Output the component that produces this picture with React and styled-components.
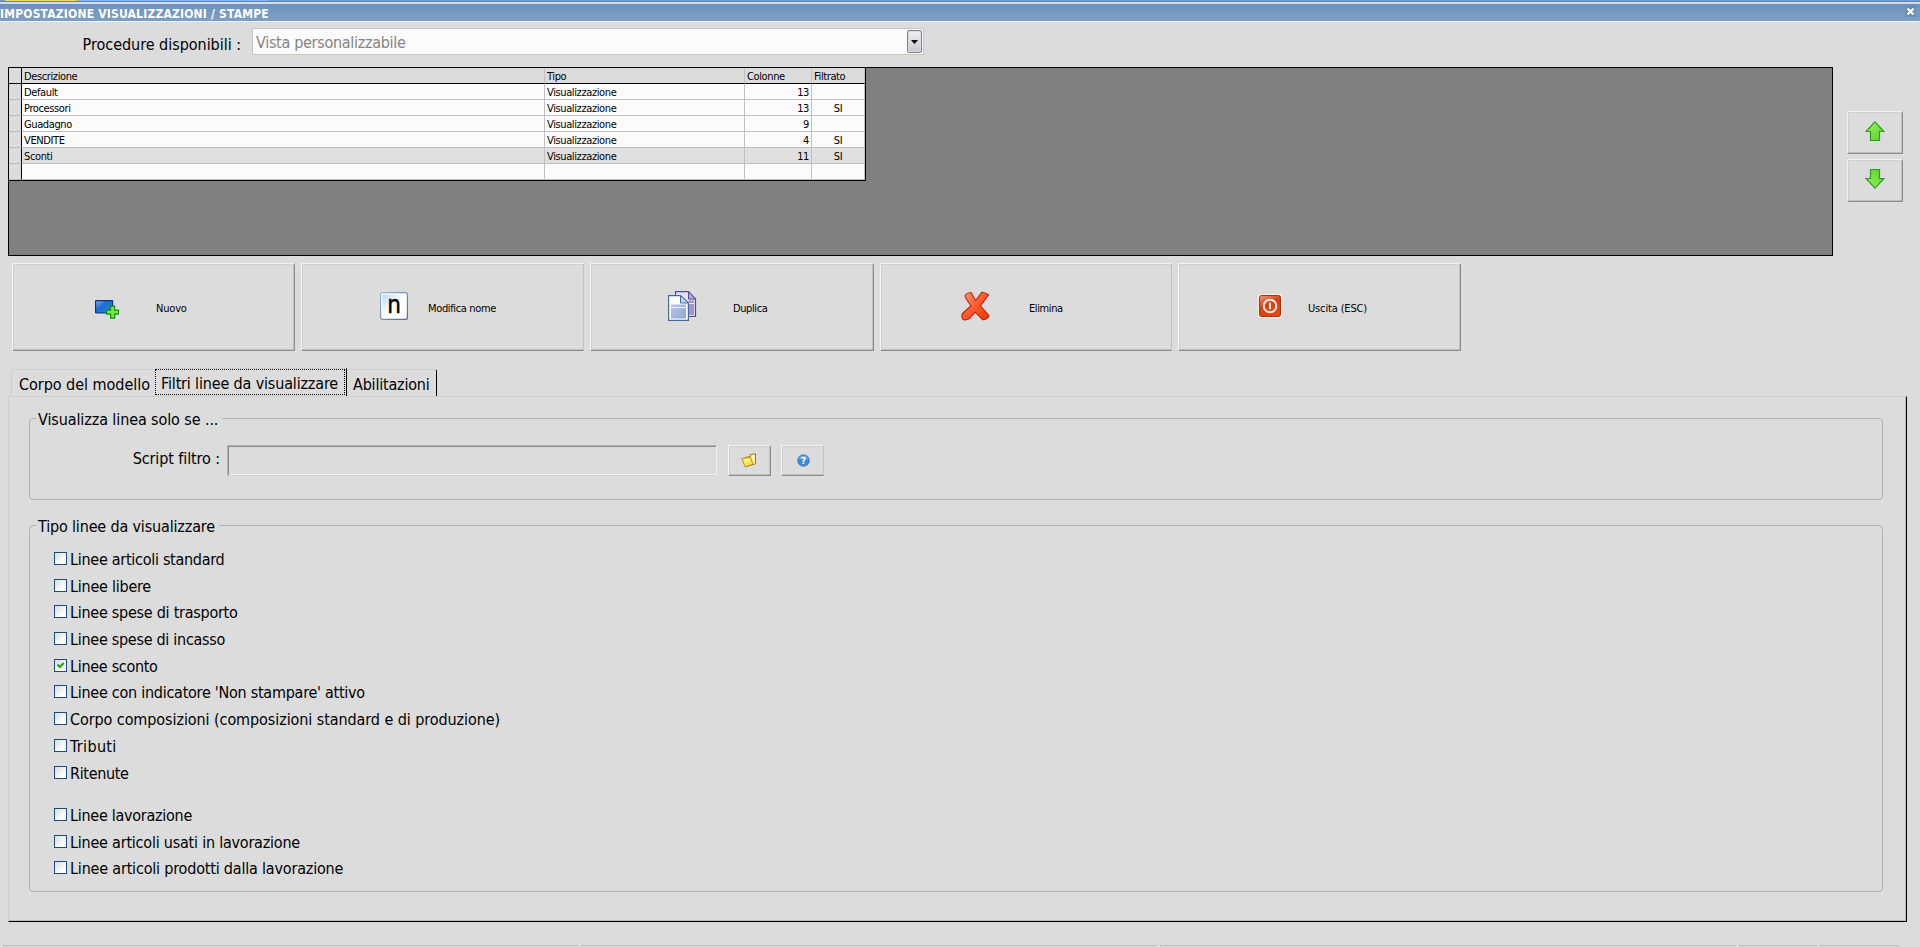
import { useState } from "react";
import styled, { createGlobalStyle } from "styled-components";

const GlobalStyle = createGlobalStyle`
  * {
    box-sizing: border-box;
  }
  body {
    margin: 0;
    overflow: hidden;
    background-color: #dcdcdc;
    color: #000;
    font-family: "DejaVu Sans Condensed", "DejaVu Sans", sans-serif;
    font-stretch: condensed;
    font-size: 16px;
  }
  button {
    font: inherit;
    color: inherit;
    margin: 0;
    padding: 0;
  }
`;

const Window = styled.div`
  height: 947px;
  display: flex;
  flex-direction: column;
  white-space: nowrap;
`;

/* top strip and title bar */
const Strip = styled.div`
  height: 2px;
  display: flex;
  padding-left: 5px;
  gap: 1px;
  background-color: #6e9bd0;
  border-bottom: 1px solid #5f86b5;
  flex: none;
`;
const StripTab = styled.div`
  width: ${({ $width }) => $width}px;
  background-color: ${({ $active }) => ($active ? "#fbd467" : "#85b7f0")};
`;
const TitleBar = styled.header`
  height: 20px;
  flex: none;
  display: flex;
  justify-content: space-between;
  align-items: center;
  padding-right: 4px;
  background: linear-gradient(#6c92bc, #7e9fc4);
  border-top: 2px solid #d6dbe2;
  border-bottom: 1px solid #eef3f9;
`;
const Title = styled.h1`
  margin: 3px 0 0;
  font-size: 12px;
  font-weight: bold;
  line-height: 16px;
  letter-spacing: 0.2px;
  color: #fff;
`;
const CloseButton = styled.button`
  width: 11px;
  height: 12px;
  border: 1px solid #6c93bf;
  background-color: #6a8cb3;
  display: flex;
  align-items: center;
  justify-content: center;
  margin-bottom: 3px;
`;

/* combo row */
const ComboRow = styled.div`
  display: flex;
  height: 45px;
  flex: none;
  padding-top: 6px;
`;
const Label = styled.label`
  width: ${({ $width }) => $width}px;
  padding: ${({ $top }) => $top}px ${({ $right }) => $right}px 0 0;
  text-align: right;
  line-height: 20px;
  letter-spacing: ${({ $track }) => $track}px;
`;
const Combo = styled.div`
  width: 672px;
  height: 27px;
  display: flex;
  justify-content: space-between;
  padding: 1px 1px 1px 3px;
  border: 1px solid #c9c7ba;
  background-color: #fbfbfb;
  color: #858585;
  line-height: 25px;
  letter-spacing: -0.3px;
`;
const ComboButton = styled.button`
  width: 15px;
  height: 23px;
  border: 1px solid #7f7f86;
  border-radius: 2px;
  background: linear-gradient(#f2f2f5, #c6c6cc);
  box-shadow: inset 0 0 0 1px #d9d9e0;
  display: flex;
  align-items: center;
  justify-content: center;
`;

/* views grid */
const GridArea = styled.div`
  display: flex;
  flex: none;
  height: 189px;
  padding-left: 8px;
  gap: 14px;
`;
const GridBack = styled.div`
  width: 1825px;
  border: 1px solid #000;
  background-color: #808080;
`;
const Grid = styled.div`
  width: 857px;
  border-right: 1px solid #000;
  border-bottom: 1px solid #000;
  background-color: #fbfbfb;
  font-size: 11px;
  line-height: 18px;
  letter-spacing: -0.38px;
`;
const GridRow = styled.div`
  height: 16px;
  display: grid;
  grid-template-columns: 13px 523px 200px 67px 53px;
  background-color: ${({ $head, $selected }) =>
    $head ? "#dcdcdc" : $selected ? "#e0e0e0" : "#fbfbfb"};
`;
const Cell = styled.span`
  height: 16px;
  overflow: hidden;
  padding: 0 2px;
  text-align: ${({ $align }) => $align || "left"};
  border-right: 1px solid #c0c0c0;
  border-bottom: 1px solid ${({ $head }) => ($head ? "#000" : "#bdbdbd")};
`;
const RowHandle = styled(Cell)`
  background-color: #dcdcdc;
  border-right-color: #000;
`;
const MoveButtons = styled.div`
  display: flex;
  flex-direction: column;
  gap: 5px;
  padding-top: 44px;
`;

/* buttons */
const RaisedButton = styled.button`
  display: flex;
  align-items: center;
  justify-content: center;
  background-color: #dcdcdc;
  border: 1px solid;
  border-color: #f2f2f2 ${({ $soft }) => ($soft ? "#c2c2c2" : "#8c8c8c")} #8c8c8c
    #f2f2f2;
  box-shadow: inset 1px 1px 0 #cfcfd4,
    inset ${({ $soft }) => ($soft ? "0" : "-1px")} -1px 0 #bebebe;
`;
const MoveButton = styled(RaisedButton)`
  width: 56px;
  height: 43px;
  padding-bottom: 2px;
`;
const SmallButton = styled(RaisedButton)`
  width: 43px;
  height: 31px;
  padding: 0 1px 1px 0;
`;
const Actions = styled.div`
  display: flex;
  flex: none;
  height: 95px;
  padding: 7px 0 0 12px;
  gap: 6px;
`;
const ActionButton = styled(RaisedButton)`
  width: ${({ $width }) => $width}px;
  height: 88px;
  justify-content: flex-start;
  padding: 0 0 2px ${({ $left }) => $left - 1}px;
  gap: ${({ $gap }) => $gap}px;
  font-size: 11px;
  letter-spacing: ${({ $track }) => $track}px;
`;
const ActionText = styled.span`
  line-height: 16px;
  padding-top: 5px;
`;

/* tabs */
const Tabs = styled.nav`
  display: flex;
  flex: none;
  align-items: flex-end;
  height: 45px;
  padding-left: 11px;
`;
const Tab = styled.button`
  width: ${({ $width }) => $width}px;
  height: 27px;
  padding-left: ${({ $left }) => $left}px;
  text-align: left;
  line-height: 29px;
  letter-spacing: ${({ $track }) => $track}px;
  background-color: #dcdcdc;
  border: 0;
  border-top: 1px solid #cdcdd2;
  border-left: ${({ $first }) => ($first ? "1px solid #cdcdd2" : "0")};
  border-right: ${({ $first }) => ($first ? "0" : "1px solid #000")};
  border-radius: 3px 2px 0 0;
`;
const ActiveTab = styled(Tab)`
  height: 28px;
  padding: 0;
  display: flex;
  border-radius: 0;
`;
const Focus = styled.span`
  width: 190px;
  height: 26px;
  padding-left: 5px;
  line-height: 27px;
  border: 1px dotted #000;
`;
const Panel = styled.section`
  width: 1899px;
  height: 526px;
  flex: none;
  margin-left: 8px;
  padding: 11px 23px 0 20px;
  border: 1px solid #d0d0d4;
  border-right-color: #000;
  border-bottom-color: #000;
  box-shadow: inset -1px -1px 0 #bcbcbc;
`;
const Group = styled.fieldset`
  height: ${({ $height }) => $height}px;
  margin: 0 0 ${({ $after }) => $after || 0}px;
  padding: 0 0 0 6px;
  border: 1px solid #b2b2b2;
  border-radius: 4px;
`;
const Legend = styled.legend`
  height: 21px;
  padding: 2px 4px 0 2px;
  line-height: 19px;
  letter-spacing: ${({ $track }) => $track}px;
`;
const FilterRow = styled.div`
  display: flex;
  padding-top: 16px;
`;
const ScriptInput = styled.input`
  width: 490px;
  height: 31px;
  margin-right: 11px;
  background-color: #dcdcdc;
  border: 1px solid;
  border-color: #b4b4b4 #f2f2f2 #d0d0d0 #b4b4b4;
  box-shadow: inset 1px 1px 0 #8a8a8a, inset 0 -1px 0 #f0f0f0;
  border-radius: 0;
  outline: 0;
`;
const HelpButton = styled(SmallButton)`
  margin-left: 10px;
  padding-left: 2px;
`;

const CheckList = styled.div`
  display: flex;
  flex-direction: column;
  padding: ${({ $top }) => $top}px 0 0 18px;
`;
const CheckRow = styled.label`
  height: 26.7px;
  display: flex;
  align-items: flex-start;
  gap: 3px;
  line-height: 16px;
  letter-spacing: ${({ $track }) => $track}px;
`;
const CheckBox = styled.span`
  width: 13px;
  height: 13px;
  flex: none;
  border: 1px solid #1f4c7c;
  background: linear-gradient(135deg, #dadad6, #fff 75%);
  display: flex;
  align-items: center;
  justify-content: center;
`;
const CheckInput = styled.input`
  display: none;
`;

const StatusBar = styled.footer`
  display: grid;
  grid-template-columns: 575px 576px 576px 78px 79px;
  gap: 3px;
  height: 2px;
  margin-top: 23px;
  padding-left: 3px;
`;
const StatusCell = styled.div`
  border-top: 1px solid #bcbcbc;
  border-left: 1px solid #c4c4c4;
`;

const CloseIcon = () => (
  <svg width="7" height="7" viewBox="0 0 7 7">
    <path d="M0.5 0.5L6.5 6.5M6.5 0.5L0.5 6.5" stroke="#fff" strokeWidth="2" />
  </svg>
);

const ArrowIcon = ({ down }) => (
  <svg width="20" height="21" viewBox="0 0 20 21">
    <defs>
      <linearGradient id="arrow" x1="0" y1="0" x2="1" y2="1">
        <stop offset="0" stopColor="#a5f26f" />
        <stop offset="1" stopColor="#4fd11c" />
      </linearGradient>
    </defs>
    <path
      transform={down ? "matrix(1 0 0 -1 0 20)" : undefined}
      d="M10 0.8L19 10.5H14.5V19.5H5.5V10.5H1Z"
      fill="url(#arrow)"
      stroke="#2b9c1d"
      strokeWidth="1.2"
    />
  </svg>
);

const NewIcon = () => (
  <svg width="24" height="30" viewBox="0 0 24 30">
    <defs>
      <linearGradient id="screen" x1="0" y1="0" x2="1" y2="1">
        <stop offset="0" stopColor="#8ab4ea" />
        <stop offset="0.4" stopColor="#1c6fd0" />
        <stop offset="1" stopColor="#1a86e6" />
      </linearGradient>
    </defs>
    <rect x="0.6" y="9.6" width="17" height="12.4" rx="0.5" fill="url(#screen)" stroke="#0c2f86" strokeWidth="1.2" />
    <path
      d="M15.6 15.1h4v4h4v4h-4v4h-4v-4h-4v-4h4z"
      fill="#75e93e"
      stroke="#158a12"
      strokeWidth="1.2"
    />
  </svg>
);

const RenameIcon = () => (
  <svg width="28" height="30" viewBox="0 0 28 30">
    <defs>
      <linearGradient id="key" x1="0" y1="0" x2="0.7" y2="0.7">
        <stop offset="0" stopColor="#b4d8fb" />
        <stop offset="0.7" stopColor="#fff" />
      </linearGradient>
      <linearGradient id="keyEdge" x1="0" y1="0" x2="1" y2="1">
        <stop offset="0" stopColor="#8fb9e4" />
        <stop offset="1" stopColor="#5b6591" />
      </linearGradient>
    </defs>
    <rect x="0.6" y="1.6" width="26.8" height="26.8" rx="2" fill="#fff" stroke="url(#keyEdge)" strokeWidth="1.2" />
    <rect x="2.5" y="3.5" width="23" height="23" fill="url(#key)" />
    <text x="14" y="22" textAnchor="middle" fontSize="24" fontFamily="DejaVu Sans Condensed" stroke="#000" strokeWidth="0.4">
      n
    </text>
  </svg>
);

const CopyIcon = () => (
  <svg width="29" height="30" viewBox="0 0 29 30">
    <defs>
      <linearGradient id="lines" x1="0" y1="0" x2="1" y2="1">
        <stop offset="0" stopColor="#b9c9e6" />
        <stop offset="1" stopColor="#8fa6d3" />
      </linearGradient>
    </defs>
    <path d="M7.5 0.6H20.5L27.5 8V25.5H7.5Z" fill="#e6e0f3" stroke="#56498f" strokeWidth="1.2" />
    <path d="M20.5 9.5H26V24H20.5Z" fill="#a394cf" />
    <path d="M20 12.5H26" stroke="#eee" />
    <path d="M20.5 0.6V8H27.5Z" fill="#b5a9e0" stroke="#56498f" />
    <path d="M0.6 4.6H12.5L20.4 12V29.4H0.6Z" fill="#fff" stroke="#446a9c" strokeWidth="1.2" />
    <path d="M3 13.5H18V27.5H3Z" fill="url(#lines)" />
    <path d="M3 16.5H18" stroke="#f3f7fc" />
    <path d="M12.5 4.6V12H20.4Z" fill="#b8dcf2" stroke="#446a9c" />
  </svg>
);

const DeleteIcon = () => (
  <svg width="29" height="30" viewBox="0 0 29 30">
    <defs>
      <linearGradient id="cross" x1="0" y1="0" x2="1" y2="1">
        <stop offset="0" stopColor="#ff9a72" />
        <stop offset="0.5" stopColor="#ff5a2c" />
        <stop offset="1" stopColor="#f03400" />
      </linearGradient>
    </defs>
    <path
      d="M4.2 4Q6.500 1.500 10 1.500L14.600 9.500L21 1.200Q25 1.500 27.600 4L19.400 14.800L28 24.500Q26.500 28.800 21.500 28.600L14.200 21.200L8.500 27.500Q5 29.500 2 28.500Q0 26 1.500 22.500L9.800 14.800L4.200 6Z"
      fill="url(#cross)"
      stroke="#c01f10"
      strokeWidth="1.1"
      strokeLinejoin="round"
    />
  </svg>
);

const ExitIcon = () => (
  <svg width="24" height="30" viewBox="0 0 24 30">
    <defs>
      <linearGradient id="exit" x1="0" y1="0" x2="0.5" y2="1">
        <stop offset="0" stopColor="#ee9a80" />
        <stop offset="0.5" stopColor="#d8401a" />
        <stop offset="1" stopColor="#e8430f" />
      </linearGradient>
    </defs>
    <rect x="0" y="3" width="24" height="24" rx="3" fill="#fbeee2" />
    <rect x="1.5" y="4.5" width="21" height="21" rx="2" fill="url(#exit)" stroke="#a83013" />
    <circle cx="12" cy="15" r="6.3" fill="none" stroke="#fbeade" strokeWidth="1.9" />
    <path d="M12 11.8V18.2" stroke="#fbeade" strokeWidth="2" />
  </svg>
);

const FolderIcon = () => (
  <svg width="16" height="15" viewBox="0 0 16 15">
    <path d="M4 4.5L9.5 3.5V1.5L14.5 0.8V10.800L4.500 13.800Z" fill="#fbeb8c" stroke="#a87a1c" />
    <path d="M10.800 2.600L13.200 2.300V9.500L11.500 6Z" fill="#fff9d2" />
    <path d="M0.800 5.500L2.500 5L9.500 4.500L12 11.300L4 13.800Z" fill="#fbe144" stroke="#b98a22" strokeWidth="0.9" />
    <path d="M3 6.500L8.500 5.800L9.200 8L3.800 9.500Z" fill="#fff6a8" />
  </svg>
);

const HelpIcon = () => (
  <svg width="15" height="15" viewBox="0 0 15 15">
    <circle cx="7.5" cy="7.5" r="6.9" fill="#c6d6e6" />
    <circle cx="7.5" cy="7.5" r="5.6" fill="#3f8ad6" stroke="#3a75b8" />
    <path d="M3 6A4.8 4.8 0 0 1 12 6Z" fill="#7db4ea" />
    <text x="7.5" y="11" textAnchor="middle" fontSize="9.5" fontWeight="bold" fill="#fff">
      ?
    </text>
  </svg>
);

const views = [
  { name: "Default", columns: 13, filtered: false },
  { name: "Processori", columns: 13, filtered: true },
  { name: "Guadagno", columns: 9, filtered: false },
  { name: "VENDITE", columns: 4, filtered: true },
  { name: "Sconti", columns: 11, filtered: true },
];

const actions = [
  { text: "Nuovo", icon: <NewIcon />, width: 283, left: 83, gap: 37, track: -0.2 },
  { text: "Modifica nome", icon: <RenameIcon />, width: 283, left: 79, gap: 20, track: -0.35, soft: true },
  { text: "Duplica", icon: <CopyIcon />, width: 284, left: 78, gap: 36, track: -0.4 },
  { text: "Elimina", icon: <DeleteIcon />, width: 292, left: 81, gap: 39, track: -0.4, soft: true },
  { text: "Uscita (ESC)", icon: <ExitIcon />, width: 283, left: 80, gap: 26, track: -0.15 },
];

const lineTypes = [
  ["Linee articoli standard", -0.28],
  ["Linee libere", -0.24],
  ["Linee spese di trasporto", -0.26],
  ["Linee spese di incasso", -0.28],
  ["Linee sconto", -0.3],
  ["Linee con indicatore 'Non stampare' attivo", -0.26],
  ["Corpo composizioni (composizioni standard e di produzione)", -0.08],
  ["Tributi", 0.35],
  ["Ritenute", -0.33],
];
const workTypes = [
  ["Linee lavorazione", -0.27],
  ["Linee articoli usati in lavorazione", -0.22],
  ["Linee articoli prodotti dalla lavorazione", -0.19],
];

const Check = ({ text, track, checked, onToggle }) => (
  <CheckRow $track={track}>
    <CheckInput type="checkbox" checked={checked} onChange={() => onToggle(text)} />
    <CheckBox>
      {checked && (
        <svg width="9" height="9" viewBox="0 0 9 9">
          <path d="M1.5 3.5L3.8 6L7.7 2" fill="none" stroke="#21a121" strokeWidth="2.2" />
        </svg>
      )}
    </CheckBox>
    {text}
  </CheckRow>
);

const App = () => {
  const [selected, setSelected] = useState("Sconti");
  const [checked, setChecked] = useState(["Linee sconto"]);
  const toggle = (text) =>
    setChecked((prev) =>
      prev.includes(text) ? prev.filter((t) => t !== text) : [...prev, text]
    );

  const renderChecks = (list) =>
    list.map(([text, track]) => (
      <Check
        key={text}
        text={text}
        track={track}
        checked={checked.includes(text)}
        onToggle={toggle}
      />
    ));

  return (
    <Window>
      <GlobalStyle />
      <Strip>
        <StripTab $width={72} $active />
        <StripTab $width={164} />
        <StripTab $width={26} />
      </Strip>
      <TitleBar>
        <Title>IMPOSTAZIONE VISUALIZZAZIONI / STAMPE</Title>
        <CloseButton>
          <CloseIcon />
        </CloseButton>
      </TitleBar>
      <ComboRow>
        <Label $width={252} $top={7} $right={11} $track={-0.03}>
          Procedure disponibili :
        </Label>
        <Combo>
          <span>Vista personalizzabile</span>
          <ComboButton>
            <svg width="7" height="4" viewBox="0 0 7 4">
              <path d="M0 0H7L3.5 4Z" />
            </svg>
          </ComboButton>
        </Combo>
      </ComboRow>
      <GridArea>
        <GridBack>
          <Grid>
            <GridRow $head>
              <RowHandle $head />
              <Cell $head>Descrizione</Cell>
              <Cell $head>Tipo</Cell>
              <Cell $head>Colonne</Cell>
              <Cell $head>Filtrato</Cell>
            </GridRow>
            {views.map(({ name, columns, filtered }) => (
              <GridRow
                key={name}
                $selected={name === selected}
                onClick={() => setSelected(name)}
              >
                <RowHandle />
                <Cell>{name}</Cell>
                <Cell>Visualizzazione</Cell>
                <Cell $align="right">{columns}</Cell>
                <Cell $align="center">{filtered && "SI"}</Cell>
              </GridRow>
            ))}
            <GridRow>
              <RowHandle />
              <Cell />
              <Cell />
              <Cell />
              <Cell />
            </GridRow>
          </Grid>
        </GridBack>
        <MoveButtons>
          <MoveButton>
            <ArrowIcon />
          </MoveButton>
          <MoveButton>
            <ArrowIcon down />
          </MoveButton>
        </MoveButtons>
      </GridArea>
      <Actions>
        {actions.map(({ text, icon, width, left, gap, track, soft }) => (
          <ActionButton
            key={text}
            $width={width}
            $left={left}
            $gap={gap}
            $track={track}
            $soft={soft}
          >
            {icon}
            <ActionText>{text}</ActionText>
          </ActionButton>
        ))}
      </Actions>
      <Tabs>
        <Tab $width={144} $left={7} $track={-0.03} $first>
          Corpo del modello
        </Tab>
        <ActiveTab $width={192} $track={-0.16}>
          <Focus>Filtri linee da visualizzare</Focus>
        </ActiveTab>
        <Tab $width={90} $left={6} $track={-0.2}>
          Abilitazioni
        </Tab>
      </Tabs>
      <Panel>
        <Group $height={92} $after={15}>
          <Legend $track={-0.1}>Visualizza linea solo se ...</Legend>
          <FilterRow>
            <Label $width={191} $top={4} $right={7} $track={-0.1}>
              Script filtro :
            </Label>
            <ScriptInput />
            <SmallButton>
              <FolderIcon />
            </SmallButton>
            <HelpButton $soft>
              <HelpIcon />
            </HelpButton>
          </FilterRow>
        </Group>
        <Group $height={377}>
          <Legend $track={-0.16}>Tipo linee da visualizzare</Legend>
          <CheckList $top={16}>{renderChecks(lineTypes)}</CheckList>
          <CheckList $top={15.7}>{renderChecks(workTypes)}</CheckList>
        </Group>
      </Panel>
      <StatusBar>
        <StatusCell />
        <StatusCell />
        <StatusCell />
        <StatusCell />
        <StatusCell />
      </StatusBar>
    </Window>
  );
};

export default App;
